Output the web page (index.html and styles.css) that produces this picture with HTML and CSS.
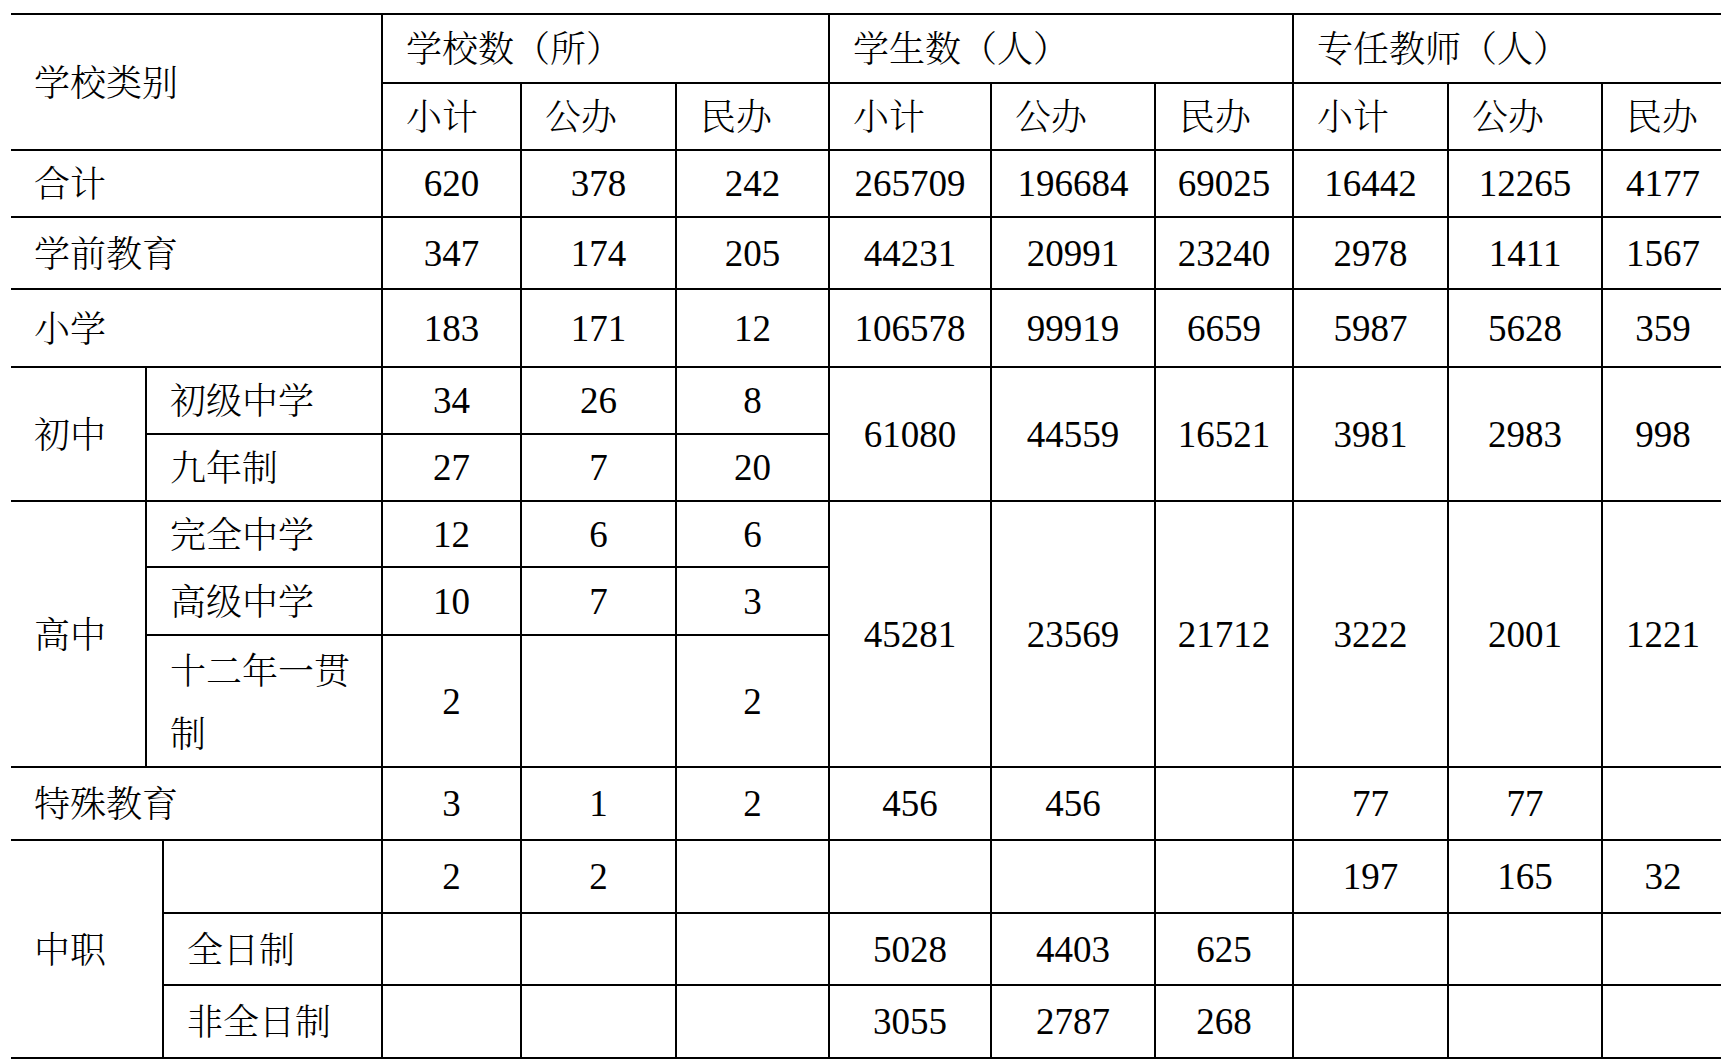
FILE: index.html
```html
<!DOCTYPE html>
<html lang="zh-CN">
<head>
<meta charset="utf-8">
<title>学校统计</title>
<link rel="stylesheet" href="styles.css">
</head>
<body>
<table class="stats">
  <colgroup>
    <col class="c1"><col class="c2"><col class="c3">
    <col class="c4"><col class="c5"><col class="c6">
    <col class="c7"><col class="c8"><col class="c9">
    <col class="c10"><col class="c11"><col class="c12">
  </colgroup>
  <tr class="r-h1">
    <td class="l" colspan="3" rowspan="2">学校类别</td>
    <td class="l" colspan="3">学校数（所）</td>
    <td class="l" colspan="3">学生数（人）</td>
    <td class="l" colspan="3">专任教师（人）</td>
  </tr>
  <tr class="r-h2">
    <td class="l">小计</td><td class="l">公办</td><td class="l">民办</td>
    <td class="l">小计</td><td class="l">公办</td><td class="l">民办</td>
    <td class="l">小计</td><td class="l">公办</td><td class="l">民办</td>
  </tr>
  <tr class="r-total">
    <td class="l" colspan="3">合计</td>
    <td>620</td><td>378</td><td>242</td>
    <td>265709</td><td>196684</td><td>69025</td>
    <td>16442</td><td>12265</td><td>4177</td>
  </tr>
  <tr class="r-pre">
    <td class="l" colspan="3">学前教育</td>
    <td>347</td><td>174</td><td>205</td>
    <td>44231</td><td>20991</td><td>23240</td>
    <td>2978</td><td>1411</td><td>1567</td>
  </tr>
  <tr class="r-pri">
    <td class="l" colspan="3">小学</td>
    <td>183</td><td>171</td><td>12</td>
    <td>106578</td><td>99919</td><td>6659</td>
    <td>5987</td><td>5628</td><td>359</td>
  </tr>
  <tr class="r-j1">
    <td class="l" rowspan="2">初中</td>
    <td class="l" colspan="2">初级中学</td>
    <td>34</td><td>26</td><td>8</td>
    <td rowspan="2">61080</td><td rowspan="2">44559</td><td rowspan="2">16521</td>
    <td rowspan="2">3981</td><td rowspan="2">2983</td><td rowspan="2">998</td>
  </tr>
  <tr class="r-j2">
    <td class="l" colspan="2">九年制</td>
    <td>27</td><td>7</td><td>20</td>
  </tr>
  <tr class="r-s1">
    <td class="l" rowspan="3">高中</td>
    <td class="l" colspan="2">完全中学</td>
    <td>12</td><td>6</td><td>6</td>
    <td rowspan="3">45281</td><td rowspan="3">23569</td><td rowspan="3">21712</td>
    <td rowspan="3">3222</td><td rowspan="3">2001</td><td rowspan="3">1221</td>
  </tr>
  <tr class="r-s2">
    <td class="l" colspan="2">高级中学</td>
    <td>10</td><td>7</td><td>3</td>
  </tr>
  <tr class="r-s3">
    <td class="l wrap" colspan="2">十二年一贯<br>制</td>
    <td>2</td><td></td><td>2</td>
  </tr>
  <tr class="r-sp">
    <td class="l" colspan="3">特殊教育</td>
    <td>3</td><td>1</td><td>2</td>
    <td>456</td><td>456</td><td></td>
    <td>77</td><td>77</td><td></td>
  </tr>
  <tr class="r-v1">
    <td class="l" colspan="2" rowspan="3">中职</td>
    <td class="l"></td>
    <td>2</td><td>2</td><td></td>
    <td></td><td></td><td></td>
    <td>197</td><td>165</td><td>32</td>
  </tr>
  <tr class="r-v2">
    <td class="l">全日制</td>
    <td></td><td></td><td></td>
    <td>5028</td><td>4403</td><td>625</td>
    <td></td><td></td><td></td>
  </tr>
  <tr class="r-v3">
    <td class="l">非全日制</td>
    <td></td><td></td><td></td>
    <td>3055</td><td>2787</td><td>268</td>
    <td></td><td></td><td></td>
  </tr>
</table>
</body>
</html>
```

FILE: styles.css
```css
html, body {
  margin: 0;
  padding: 0;
  background: #ffffff;
  overflow: hidden;
}

body {
  width: 1721px;
  height: 1060px;
  font-family: "Liberation Serif", "Noto Serif CJK SC", "Noto Sans CJK SC", serif;
  font-size: 37px;
  color: #000000;
}

.stats {
  margin: 13px 0 0 11px;
  border-collapse: collapse;
  table-layout: fixed;
  width: 1713px;
}

.c1 { width: 135px; }
.c2 { width: 17px; }
.c3 { width: 219px; }
.c4 { width: 139px; }
.c5 { width: 155px; }
.c6 { width: 153px; }
.c7 { width: 162px; }
.c8 { width: 164px; }
.c9 { width: 138px; }
.c10 { width: 155px; }
.c11 { width: 154px; }
.c12 { width: 122px; }

.stats td {
  border: 2px solid #000000;
  padding: 0;
  text-align: center;
  vertical-align: middle;
  white-space: nowrap;
  overflow: hidden;
  font-family: "Liberation Serif", "Noto Serif CJK SC", serif;
}

.stats tr > td:first-child[class~="l"] {
  border-left: none;
}

.stats td.l {
  text-align: left;
  padding: 0 0 4px 23px;
  font-family: "Noto Serif CJK SC", "Noto Sans CJK SC", serif;
  font-weight: 300;
  font-size: 36px;
}

.stats td.wrap {
  line-height: 63px;
  padding-bottom: 2px;
}

.r-h1 { height: 69px; }
.r-h2 { height: 67px; }
.r-total { height: 67px; }
.r-pre { height: 72px; }
.r-pri { height: 78px; }
.r-j1 { height: 67px; }
.r-j2 { height: 67px; }
.r-s1 { height: 66px; }
.r-s2 { height: 68px; }
.r-s3 { height: 132px; }
.r-sp { height: 73px; }
.r-v1 { height: 73px; }
.r-v2 { height: 72px; }
.r-v3 { height: 73px; }
```
